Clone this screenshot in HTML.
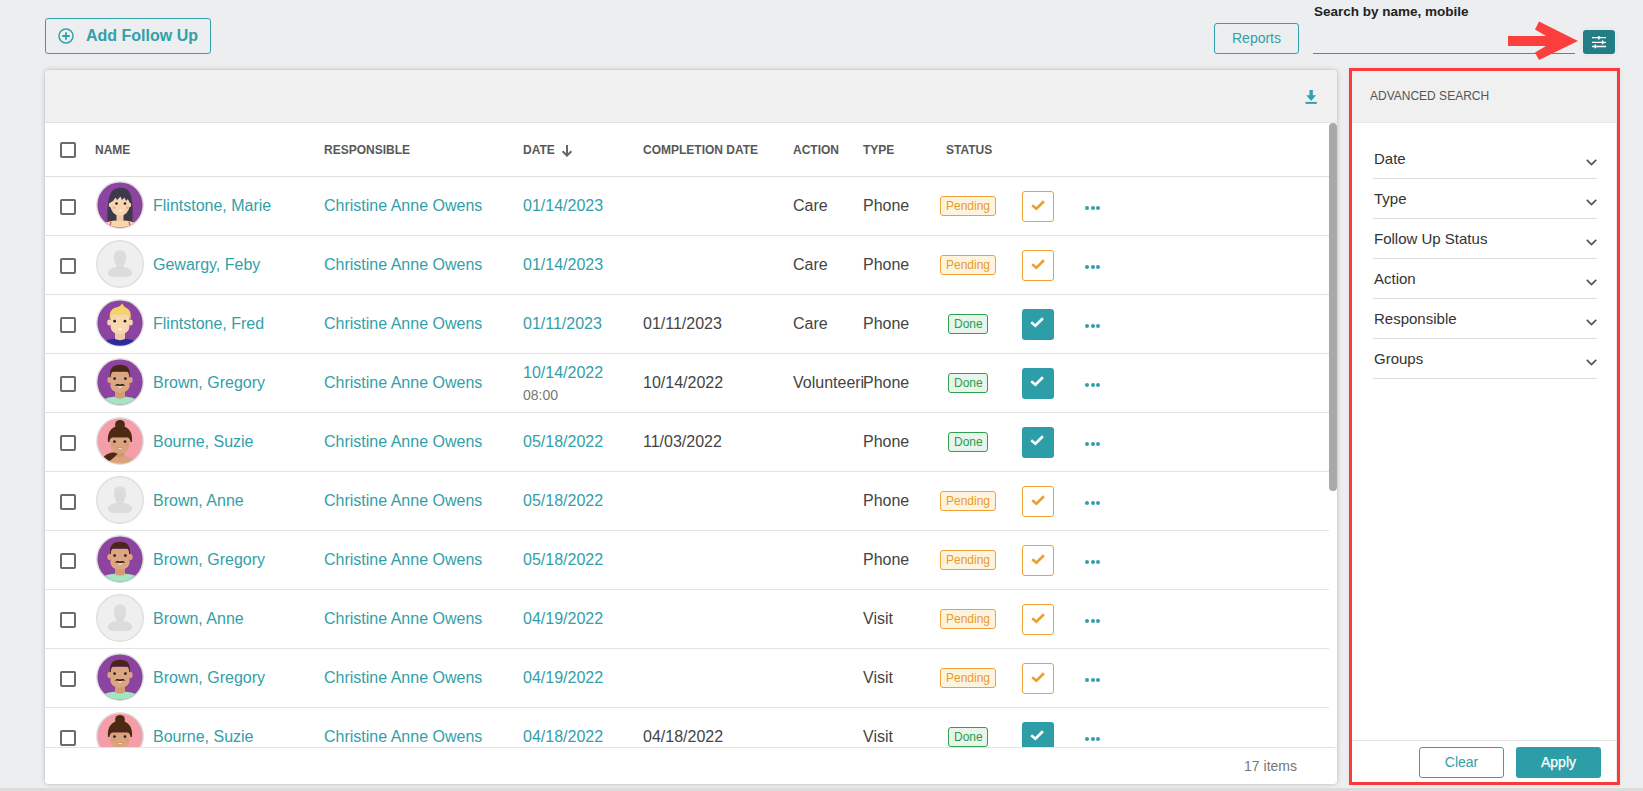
<!DOCTYPE html>
<html><head><meta charset="utf-8"><title>Follow Ups</title>
<style>
*{box-sizing:border-box;margin:0;padding:0}
html,body{width:1643px;height:791px;overflow:hidden;background:#eceef0;font-family:"Liberation Sans",sans-serif}
#root{position:relative;width:1643px;height:791px;overflow:hidden;background:#eceef0}
.addbtn{position:absolute;left:45px;top:18px;width:166px;height:36px;border:1px solid #33a0a9;border-radius:3px;color:#33a0a9;font-weight:bold;font-size:16px}
.addbtn svg{position:absolute;left:12px;top:9px}
.addbtn span{position:absolute;left:40px;top:8px;line-height:18px}
.reports{position:absolute;left:1214px;top:23px;width:85px;height:31px;border:1px solid #33a0a9;border-radius:3px;color:#33a0a9;font-size:14px;line-height:29px;text-align:center}
.slabel{position:absolute;left:1314px;top:4px;font-size:13.5px;font-weight:bold;color:#222;line-height:16px}
.sline{position:absolute;left:1313px;top:53px;width:262px;height:1px;background:#7a7a7a}
.fbtn{position:absolute;left:1583px;top:30px;width:32px;height:24px;border-radius:3px;background:#237d85;box-shadow:0 0 0 1px rgba(255,255,255,.3),0 0 4px rgba(0,0,0,.1)}
.card{position:absolute;left:45px;top:70px;width:1292px;height:714px;background:#fff;border-radius:4px;box-shadow:0 0 1px rgba(0,0,0,.22),0 0 5px rgba(0,0,0,.2)}
.chead{position:absolute;left:45px;top:70px;width:1292px;height:53px;background:#f0f0f0;border-bottom:1px solid #e2e2e2;border-radius:4px 4px 0 0}
.hsep{position:absolute;left:45px;top:176px;width:1284px;height:1px;background:#e0e0e0}
.th{position:absolute;top:143px;font-size:12px;font-weight:bold;color:#585858;line-height:14px}
.sep{position:absolute;left:45px;width:1284px;height:1px;background:#e3e3e3}
.rcb{position:absolute;width:16px;height:16px;border:2px solid #6a6a6a;border-radius:2px}
.avw{position:absolute;width:48px;height:48px}
.c{position:absolute;font-size:16px;line-height:18px;white-space:nowrap}
.link{color:#33a0a9}
.dark{color:#444}
.time{font-size:14px;color:#777;line-height:14px}
.badge{position:absolute;height:20px;border:1px solid;border-radius:3px;font-size:12px;line-height:18px;padding:0 5px}
.bp{background:#fdf4df;border-color:#eea233;color:#e99a2a;width:56px}
.bd{background:#e8f4ec;border-color:#2ba24e;color:#24a04a;width:40px}
.cb{position:absolute;width:32px;height:31px;border-radius:3px}
.cb.pend{border:1px solid #eea233;background:#fff}
.cb.done{background:#2d9ea8}
.cb.done svg{left:0;top:0}
.dots{position:absolute;width:16px;height:5px}
.dots i{position:absolute;top:0;width:4.2px;height:4.2px;border-radius:50%;background:#33a0a9}
.dots i:nth-child(1){left:0}.dots i:nth-child(2){left:5.6px}.dots i:nth-child(3){left:11.2px}
.av{display:block}
.tfoot{position:absolute;left:45px;top:747px;width:1292px;height:37px;background:#fff;border-top:1px solid #e3e3e3;border-radius:0 4px 4px 4px}
.items{position:absolute;right:40px;top:10px;font-size:14px;color:#777;line-height:16px}
.sbar{position:absolute;left:1329px;top:123px;width:8px;height:368px;border-radius:4px;background:#a9a9a9}
.panel{position:absolute;left:1349px;top:68px;width:271px;height:717px;border:3px solid #fb3b3b;background:#fff;box-shadow:inset -1px 0 0 #e9e9e9,0 0 3px rgba(0,0,0,.08)}
.phead{position:absolute;left:1352px;top:71px;width:264px;height:52px;background:#f0f0f0;border-bottom:1px solid #e8e8e8}
.ptitle{position:absolute;left:1370px;top:89px;font-size:12px;color:#555;line-height:14px}
.pitem{position:absolute;left:1373px;width:224px;height:40px;border-bottom:1px solid #dedede}
.pitem span{position:absolute;left:1px;top:11px;font-size:15px;color:#333;line-height:17px}
.pitem svg{position:absolute;left:213px;top:20px}
.pfoot{position:absolute;left:1352px;top:740px;width:265px;height:1px;background:#e2e2e2}
.clear{position:absolute;left:1419px;top:747px;width:85px;height:31px;border:1px solid #33a0a9;border-radius:3px;color:#33a0a9;font-size:14px;line-height:29px;text-align:center}
.apply{position:absolute;left:1516px;top:747px;width:85px;height:31px;border-radius:3px;background:#2d9ea8;color:#fff;font-size:14px;line-height:31px;text-align:center;-webkit-text-stroke:0.25px #fff}
.bottombar{position:absolute;left:0;top:788px;width:1643px;height:3px;background:#dcdcdc}
</style></head><body><div id="root">
<div class="addbtn"><svg width="16" height="16" viewBox="0 0 16 16"><circle cx="8" cy="8" r="7" stroke="#33a0a9" stroke-width="1.5" fill="none"/><path d="M8 4.2V11.8M4.2 8H11.8" stroke="#33a0a9" stroke-width="1.8"/></svg><span>Add Follow Up</span></div>
<div class="reports">Reports</div>
<div class="slabel">Search by name, mobile</div>
<div class="sline"></div>
<svg style="position:absolute;left:1500px;top:15px" width="85" height="55" viewBox="1500 15 85 55"><path d="M1508 36 L1546 36 L1535 29.5 L1539 21.5 L1578 41 L1539 60 L1535 52.5 L1546 46 L1508 46 Z" fill="#fb3e3e"/></svg>
<div class="fbtn"><svg width="32" height="24" viewBox="0 0 32 24"><path d="M9 7.6H23M9 12.4H23M9 16.5H23" stroke="#fff" stroke-width="1.4"/><path d="M15.9 5.9V9.6M19.6 10.6V14.2M12.3 14.6V18.3" stroke="#fff" stroke-width="1.5"/></svg></div>
<div class="card"></div>
<div class="chead"><svg style="position:absolute;left:1260px;top:20px" width="12" height="14" viewBox="0 0 12 14"><path d="M4.5 0H7.8V5.2H11L6.15 11L1.3 5.2H4.5Z" fill="#33a0a9"/><rect x="0.5" y="11.9" width="11.3" height="2" fill="#33a0a9"/></svg></div>
<div class="rcb" style="left:60px;top:142px"></div>
<div class="th" style="left:95px">NAME</div>
<div class="th" style="left:324px">RESPONSIBLE</div>
<div class="th" style="left:523px">DATE</div><svg style="position:absolute;left:561px;top:144px" width="12" height="13" viewBox="0 0 12 13"><path d="M6 1V11.5M1.6 7.2L6 11.6L10.4 7.2" stroke="#666" stroke-width="2" fill="none"/></svg>
<div class="th" style="left:643px">COMPLETION DATE</div>
<div class="th" style="left:793px">ACTION</div>
<div class="th" style="left:863px">TYPE</div>
<div class="th" style="left:946px">STATUS</div>
<div class="hsep"></div>
<div class="sep" style="top:235px"></div>
<div class="rcb" style="left:60px;top:199px"></div>
<div class="avw" style="left:96px;top:181px"><svg class="av" width="48" height="48" viewBox="0 0 48 48"><defs><clipPath id="c0"><circle cx="24" cy="24" r="22.6"/></clipPath></defs><circle cx="24" cy="24" r="24" fill="#dedede"/><g clip-path="url(#c0)"><rect width="48" height="48" fill="#8d43a0"/><path d="M11.5 41 C11 26 12 12 18 8.5 C22 6 28 6 31 8.5 C37 12 37 26 36.5 41 Z" fill="#3d3b4b"/><path d="M4 48 C6 41 14 39.5 24 39.5 C34 39.5 42 41 44 48 Z" fill="#f7d6b0"/><path d="M13.5 48 L15 40.5 M34.5 48 L33 40.5" stroke="#e4685e" stroke-width="1.4"/><path d="M4.5 48 C10 45 16 46.5 24 46.5 C32 46.5 38 45 43.5 48" stroke="#e4685e" stroke-width="1.2" fill="none"/><rect x="20.5" y="31" width="7" height="9" fill="#f2c9a0"/><ellipse cx="24" cy="24" rx="9.6" ry="10.8" fill="#f7d6b0"/><ellipse cx="14.6" cy="24" rx="1.8" ry="2.4" fill="#f7d6b0"/><ellipse cx="33.4" cy="24" rx="1.8" ry="2.4" fill="#f7d6b0"/><path d="M13.5 22 C13.5 14 17 10.5 24 10.5 C31 10.5 34.5 14 34.5 22 L32 18 L30 20 L28.5 16.5 L26 19 L24.5 15.5 L21 19 L19.5 16.5 L17 20 Z" fill="#3d3b4b"/><circle cx="20.5" cy="22.5" r="1.3" fill="#222"/><circle cx="29" cy="22.5" r="1.3" fill="#222"/><circle cx="18" cy="26.5" r="1.5" fill="#f0a890" opacity=".7"/><circle cx="31.5" cy="26.5" r="1.5" fill="#f0a890" opacity=".7"/><path d="M22.3 29 Q24.6 30.8 27 29 Z" fill="#fff"/></g></svg></div>
<div class="c link" style="left:153px;top:197px">Flintstone, Marie</div>
<div class="c link" style="left:324px;top:197px">Christine Anne Owens</div>
<div class="c link" style="left:523px;top:197px">01/14/2023</div>
<div class="c dark" style="left:793px;top:197px">Care</div>
<div class="c dark" style="left:863px;top:197px">Phone</div>
<div class="badge bp" style="left:940px;top:196px">Pending</div>
<div class="cb pend" style="left:1022px;top:191px"><svg width="32" height="31" viewBox="0 0 32 31" style="position:absolute;left:-1px;top:-1px"><path d="M10.2 14.2 L14.4 17.7 L21.9 10.3" stroke="#eb9f2e" stroke-width="2.6" fill="none"/></svg></div>
<div class="dots" style="left:1085px;top:206px"><i></i><i></i><i></i></div>
<div class="sep" style="top:294px"></div>
<div class="rcb" style="left:60px;top:258px"></div>
<div class="avw" style="left:96px;top:240px"><svg class="av" width="48" height="48" viewBox="0 0 48 48"><circle cx="24" cy="24" r="23.3" fill="#efefef" stroke="#dfdfdf" stroke-width="1.4"/><path d="M18 17 C18 12 20.5 10.5 24 10.5 C27.5 10.5 30 12 30 17 C30 21 29 24 27.5 25.5 L27.5 27 C31 27.5 35.5 29 36 32 C36.5 35 34 37 30 37 L18 37 C14 37 11.5 35 12 32 C12.5 29 17 27.5 20.5 27 L20.5 25.5 C19 24 18 21 18 17 Z" fill="#dcdcdc"/></svg></div>
<div class="c link" style="left:153px;top:256px">Gewargy, Feby</div>
<div class="c link" style="left:324px;top:256px">Christine Anne Owens</div>
<div class="c link" style="left:523px;top:256px">01/14/2023</div>
<div class="c dark" style="left:793px;top:256px">Care</div>
<div class="c dark" style="left:863px;top:256px">Phone</div>
<div class="badge bp" style="left:940px;top:255px">Pending</div>
<div class="cb pend" style="left:1022px;top:250px"><svg width="32" height="31" viewBox="0 0 32 31" style="position:absolute;left:-1px;top:-1px"><path d="M10.2 14.2 L14.4 17.7 L21.9 10.3" stroke="#eb9f2e" stroke-width="2.6" fill="none"/></svg></div>
<div class="dots" style="left:1085px;top:265px"><i></i><i></i><i></i></div>
<div class="sep" style="top:353px"></div>
<div class="rcb" style="left:60px;top:317px"></div>
<div class="avw" style="left:96px;top:299px"><svg class="av" width="48" height="48" viewBox="0 0 48 48"><defs><clipPath id="c2"><circle cx="24" cy="24" r="22.6"/></clipPath></defs><circle cx="24" cy="24" r="24" fill="#dedede"/><g clip-path="url(#c2)"><rect width="48" height="48" fill="#8d43a0"/><path d="M2 48 C5 42 13 39.6 24 39.6 C35 39.6 43 42 46 48 Z" fill="#2a2e9c"/><path d="M19 34 L29 34 L29 40 C26 41.5 22 41.5 19 40 Z" fill="#f0c8a0"/><path d="M14.6 15 L33.4 15 L33.4 27 C33.4 32.5 29.5 35 24 35 C18.5 35 14.6 32.5 14.6 27 Z" fill="#f7d6b0"/><ellipse cx="13.2" cy="23.5" rx="2" ry="3" fill="#f7d6b0"/><ellipse cx="34.8" cy="23.5" rx="2" ry="3" fill="#f7d6b0"/><path d="M13.8 20 C13.2 13 15.5 9.5 20 8.6 C22.5 8 24.5 7 26.5 4.6 C27.2 6.5 28.2 7.8 30 8.8 C34 10.5 35.3 14 34.6 20 L33.6 20 C33.4 17 32.6 15.4 30.5 15.4 L17.5 15.4 C15.5 15.4 14.7 17 14.6 20 Z" fill="#f3d36c"/><circle cx="18.6" cy="22.2" r="1.35" fill="#222"/><circle cx="29" cy="22.2" r="1.35" fill="#222"/><path d="M21.6 29.8 Q24.2 32.2 26.8 29.8 Z" fill="#fff"/></g></svg></div>
<div class="c link" style="left:153px;top:315px">Flintstone, Fred</div>
<div class="c link" style="left:324px;top:315px">Christine Anne Owens</div>
<div class="c link" style="left:523px;top:315px">01/11/2023</div>
<div class="c dark" style="left:643px;top:315px">01/11/2023</div>
<div class="c dark" style="left:793px;top:315px">Care</div>
<div class="c dark" style="left:863px;top:315px">Phone</div>
<div class="badge bd" style="left:948px;top:314px">Done</div>
<div class="cb done" style="left:1022px;top:309px"><svg width="32" height="31" viewBox="0 0 32 31" style="position:absolute;left:-1px;top:-1px"><path d="M10.2 14.2 L14.4 17.7 L21.9 10.3" stroke="#fff" stroke-width="2.6" fill="none"/></svg></div>
<div class="dots" style="left:1085px;top:324px"><i></i><i></i><i></i></div>
<div class="sep" style="top:412px"></div>
<div class="rcb" style="left:60px;top:376px"></div>
<div class="avw" style="left:96px;top:358px"><svg class="av" width="48" height="48" viewBox="0 0 48 48"><defs><clipPath id="c3"><circle cx="24" cy="24" r="22.6"/></clipPath></defs><circle cx="24" cy="24" r="24" fill="#dedede"/><g clip-path="url(#c3)"><rect width="48" height="48" fill="#8d43a0"/><path d="M1 48 C4 41 12 38.5 24 38.5 C36 38.5 44 41 47 48 Z" fill="#a3e6bf"/><path d="M19 33 L29 33 L29 39.5 C26 41 22 41 19 39.5 Z" fill="#d39c76"/><path d="M14.4 14 L33.6 14 L33.6 27 C33.6 32 29.5 34.5 24 34.5 C18.5 34.5 14.4 32 14.4 27 Z" fill="#dca682"/><ellipse cx="13.4" cy="22" rx="2" ry="3" fill="#dca682"/><ellipse cx="34.6" cy="22" rx="2" ry="3" fill="#dca682"/><path d="M14 19 C13.5 10 17 6.8 24 6.8 C31 6.8 34.5 10 34 19 L33.2 19 C33 15 32 13.6 30 13.6 L18 13.6 C16 13.6 15 15 14.8 19 Z" fill="#4a2618"/><circle cx="18.6" cy="20.6" r="1.35" fill="#222"/><circle cx="29.4" cy="20.6" r="1.35" fill="#222"/><path d="M18.5 27.8 C20 25.6 22.5 25.8 24 26.6 C25.5 25.8 28 25.6 29.5 27.8 C27.5 27.3 25.5 27.8 24 28.3 C22.5 27.8 20.5 27.3 18.5 27.8 Z" fill="#2a1a12"/><path d="M21.8 28.6 Q24 30.8 26.6 28.6 Z" fill="#fff"/></g></svg></div>
<div class="c link" style="left:153px;top:374px">Brown, Gregory</div>
<div class="c link" style="left:324px;top:374px">Christine Anne Owens</div>
<div class="c link" style="left:523px;top:364px">10/14/2022</div>
<div class="c time" style="left:523px;top:388px">08:00</div>
<div class="c dark" style="left:643px;top:374px">10/14/2022</div>
<div class="c dark" style="left:793px;top:374px">Volunteeri</div>
<div class="c dark" style="left:863px;top:374px">Phone</div>
<div class="badge bd" style="left:948px;top:373px">Done</div>
<div class="cb done" style="left:1022px;top:368px"><svg width="32" height="31" viewBox="0 0 32 31" style="position:absolute;left:-1px;top:-1px"><path d="M10.2 14.2 L14.4 17.7 L21.9 10.3" stroke="#fff" stroke-width="2.6" fill="none"/></svg></div>
<div class="dots" style="left:1085px;top:383px"><i></i><i></i><i></i></div>
<div class="sep" style="top:471px"></div>
<div class="rcb" style="left:60px;top:435px"></div>
<div class="avw" style="left:96px;top:417px"><svg class="av" width="48" height="48" viewBox="0 0 48 48"><defs><clipPath id="c4"><circle cx="24" cy="24" r="22.6"/></clipPath></defs><circle cx="24" cy="24" r="24" fill="#dedede"/><g clip-path="url(#c4)"><rect width="48" height="48" fill="#f59ea9"/><path d="M6 48 C8 42 15 39 24 39 C33 39 40 42 42 48 Z" fill="#d9a47c"/><path d="M20.5 34 L28 34 L28.5 40 L20 40 Z" fill="#cf9870"/><path d="M4 46 C6 40 11 36.5 16 35.6 C18.5 35.2 20.5 36 21.5 37 C17.5 41.5 12 45.5 7 47.5 Z" fill="#4c2912"/><path d="M14.4 21 L33.6 21 L33.6 27.5 C33.6 33 29.5 36.2 24 36.2 C18.5 36.2 14.4 33 14.4 27.5 Z" fill="#d9a47c"/><circle cx="24" cy="7.8" r="4.9" fill="#4c2912"/><path d="M12 25 C11 15 15.5 9 24 9 C32.5 9 37 15 36 25 L34.6 25 C34 22 33 20.6 31 20.6 L17 20.6 C15 20.6 14 22 13.4 25 Z" fill="#4c2912"/><circle cx="18.5" cy="24.6" r="1.35" fill="#222"/><circle cx="29" cy="24.6" r="1.35" fill="#222"/><circle cx="16.8" cy="28" r="1.7" fill="#e88a85" opacity=".6"/><circle cx="30.8" cy="28" r="1.7" fill="#e88a85" opacity=".6"/><path d="M21 31 Q24.2 34.2 27.4 31 Z" fill="#fff" stroke="#d86a4a" stroke-width=".5"/></g></svg></div>
<div class="c link" style="left:153px;top:433px">Bourne, Suzie</div>
<div class="c link" style="left:324px;top:433px">Christine Anne Owens</div>
<div class="c link" style="left:523px;top:433px">05/18/2022</div>
<div class="c dark" style="left:643px;top:433px">11/03/2022</div>
<div class="c dark" style="left:863px;top:433px">Phone</div>
<div class="badge bd" style="left:948px;top:432px">Done</div>
<div class="cb done" style="left:1022px;top:427px"><svg width="32" height="31" viewBox="0 0 32 31" style="position:absolute;left:-1px;top:-1px"><path d="M10.2 14.2 L14.4 17.7 L21.9 10.3" stroke="#fff" stroke-width="2.6" fill="none"/></svg></div>
<div class="dots" style="left:1085px;top:442px"><i></i><i></i><i></i></div>
<div class="sep" style="top:530px"></div>
<div class="rcb" style="left:60px;top:494px"></div>
<div class="avw" style="left:96px;top:476px"><svg class="av" width="48" height="48" viewBox="0 0 48 48"><circle cx="24" cy="24" r="23.3" fill="#efefef" stroke="#dfdfdf" stroke-width="1.4"/><path d="M18 17 C18 12 20.5 10.5 24 10.5 C27.5 10.5 30 12 30 17 C30 21 29 24 27.5 25.5 L27.5 27 C31 27.5 35.5 29 36 32 C36.5 35 34 37 30 37 L18 37 C14 37 11.5 35 12 32 C12.5 29 17 27.5 20.5 27 L20.5 25.5 C19 24 18 21 18 17 Z" fill="#dcdcdc"/></svg></div>
<div class="c link" style="left:153px;top:492px">Brown, Anne</div>
<div class="c link" style="left:324px;top:492px">Christine Anne Owens</div>
<div class="c link" style="left:523px;top:492px">05/18/2022</div>
<div class="c dark" style="left:863px;top:492px">Phone</div>
<div class="badge bp" style="left:940px;top:491px">Pending</div>
<div class="cb pend" style="left:1022px;top:486px"><svg width="32" height="31" viewBox="0 0 32 31" style="position:absolute;left:-1px;top:-1px"><path d="M10.2 14.2 L14.4 17.7 L21.9 10.3" stroke="#eb9f2e" stroke-width="2.6" fill="none"/></svg></div>
<div class="dots" style="left:1085px;top:501px"><i></i><i></i><i></i></div>
<div class="sep" style="top:589px"></div>
<div class="rcb" style="left:60px;top:553px"></div>
<div class="avw" style="left:96px;top:535px"><svg class="av" width="48" height="48" viewBox="0 0 48 48"><defs><clipPath id="c6"><circle cx="24" cy="24" r="22.6"/></clipPath></defs><circle cx="24" cy="24" r="24" fill="#dedede"/><g clip-path="url(#c6)"><rect width="48" height="48" fill="#8d43a0"/><path d="M1 48 C4 41 12 38.5 24 38.5 C36 38.5 44 41 47 48 Z" fill="#a3e6bf"/><path d="M19 33 L29 33 L29 39.5 C26 41 22 41 19 39.5 Z" fill="#d39c76"/><path d="M14.4 14 L33.6 14 L33.6 27 C33.6 32 29.5 34.5 24 34.5 C18.5 34.5 14.4 32 14.4 27 Z" fill="#dca682"/><ellipse cx="13.4" cy="22" rx="2" ry="3" fill="#dca682"/><ellipse cx="34.6" cy="22" rx="2" ry="3" fill="#dca682"/><path d="M14 19 C13.5 10 17 6.8 24 6.8 C31 6.8 34.5 10 34 19 L33.2 19 C33 15 32 13.6 30 13.6 L18 13.6 C16 13.6 15 15 14.8 19 Z" fill="#4a2618"/><circle cx="18.6" cy="20.6" r="1.35" fill="#222"/><circle cx="29.4" cy="20.6" r="1.35" fill="#222"/><path d="M18.5 27.8 C20 25.6 22.5 25.8 24 26.6 C25.5 25.8 28 25.6 29.5 27.8 C27.5 27.3 25.5 27.8 24 28.3 C22.5 27.8 20.5 27.3 18.5 27.8 Z" fill="#2a1a12"/><path d="M21.8 28.6 Q24 30.8 26.6 28.6 Z" fill="#fff"/></g></svg></div>
<div class="c link" style="left:153px;top:551px">Brown, Gregory</div>
<div class="c link" style="left:324px;top:551px">Christine Anne Owens</div>
<div class="c link" style="left:523px;top:551px">05/18/2022</div>
<div class="c dark" style="left:863px;top:551px">Phone</div>
<div class="badge bp" style="left:940px;top:550px">Pending</div>
<div class="cb pend" style="left:1022px;top:545px"><svg width="32" height="31" viewBox="0 0 32 31" style="position:absolute;left:-1px;top:-1px"><path d="M10.2 14.2 L14.4 17.7 L21.9 10.3" stroke="#eb9f2e" stroke-width="2.6" fill="none"/></svg></div>
<div class="dots" style="left:1085px;top:560px"><i></i><i></i><i></i></div>
<div class="sep" style="top:648px"></div>
<div class="rcb" style="left:60px;top:612px"></div>
<div class="avw" style="left:96px;top:594px"><svg class="av" width="48" height="48" viewBox="0 0 48 48"><circle cx="24" cy="24" r="23.3" fill="#efefef" stroke="#dfdfdf" stroke-width="1.4"/><path d="M18 17 C18 12 20.5 10.5 24 10.5 C27.5 10.5 30 12 30 17 C30 21 29 24 27.5 25.5 L27.5 27 C31 27.5 35.5 29 36 32 C36.5 35 34 37 30 37 L18 37 C14 37 11.5 35 12 32 C12.5 29 17 27.5 20.5 27 L20.5 25.5 C19 24 18 21 18 17 Z" fill="#dcdcdc"/></svg></div>
<div class="c link" style="left:153px;top:610px">Brown, Anne</div>
<div class="c link" style="left:324px;top:610px">Christine Anne Owens</div>
<div class="c link" style="left:523px;top:610px">04/19/2022</div>
<div class="c dark" style="left:863px;top:610px">Visit</div>
<div class="badge bp" style="left:940px;top:609px">Pending</div>
<div class="cb pend" style="left:1022px;top:604px"><svg width="32" height="31" viewBox="0 0 32 31" style="position:absolute;left:-1px;top:-1px"><path d="M10.2 14.2 L14.4 17.7 L21.9 10.3" stroke="#eb9f2e" stroke-width="2.6" fill="none"/></svg></div>
<div class="dots" style="left:1085px;top:619px"><i></i><i></i><i></i></div>
<div class="sep" style="top:707px"></div>
<div class="rcb" style="left:60px;top:671px"></div>
<div class="avw" style="left:96px;top:653px"><svg class="av" width="48" height="48" viewBox="0 0 48 48"><defs><clipPath id="c8"><circle cx="24" cy="24" r="22.6"/></clipPath></defs><circle cx="24" cy="24" r="24" fill="#dedede"/><g clip-path="url(#c8)"><rect width="48" height="48" fill="#8d43a0"/><path d="M1 48 C4 41 12 38.5 24 38.5 C36 38.5 44 41 47 48 Z" fill="#a3e6bf"/><path d="M19 33 L29 33 L29 39.5 C26 41 22 41 19 39.5 Z" fill="#d39c76"/><path d="M14.4 14 L33.6 14 L33.6 27 C33.6 32 29.5 34.5 24 34.5 C18.5 34.5 14.4 32 14.4 27 Z" fill="#dca682"/><ellipse cx="13.4" cy="22" rx="2" ry="3" fill="#dca682"/><ellipse cx="34.6" cy="22" rx="2" ry="3" fill="#dca682"/><path d="M14 19 C13.5 10 17 6.8 24 6.8 C31 6.8 34.5 10 34 19 L33.2 19 C33 15 32 13.6 30 13.6 L18 13.6 C16 13.6 15 15 14.8 19 Z" fill="#4a2618"/><circle cx="18.6" cy="20.6" r="1.35" fill="#222"/><circle cx="29.4" cy="20.6" r="1.35" fill="#222"/><path d="M18.5 27.8 C20 25.6 22.5 25.8 24 26.6 C25.5 25.8 28 25.6 29.5 27.8 C27.5 27.3 25.5 27.8 24 28.3 C22.5 27.8 20.5 27.3 18.5 27.8 Z" fill="#2a1a12"/><path d="M21.8 28.6 Q24 30.8 26.6 28.6 Z" fill="#fff"/></g></svg></div>
<div class="c link" style="left:153px;top:669px">Brown, Gregory</div>
<div class="c link" style="left:324px;top:669px">Christine Anne Owens</div>
<div class="c link" style="left:523px;top:669px">04/19/2022</div>
<div class="c dark" style="left:863px;top:669px">Visit</div>
<div class="badge bp" style="left:940px;top:668px">Pending</div>
<div class="cb pend" style="left:1022px;top:663px"><svg width="32" height="31" viewBox="0 0 32 31" style="position:absolute;left:-1px;top:-1px"><path d="M10.2 14.2 L14.4 17.7 L21.9 10.3" stroke="#eb9f2e" stroke-width="2.6" fill="none"/></svg></div>
<div class="dots" style="left:1085px;top:678px"><i></i><i></i><i></i></div>
<div class="sep" style="top:766px"></div>
<div class="rcb" style="left:60px;top:730px"></div>
<div class="avw" style="left:96px;top:712px"><svg class="av" width="48" height="48" viewBox="0 0 48 48"><defs><clipPath id="c9"><circle cx="24" cy="24" r="22.6"/></clipPath></defs><circle cx="24" cy="24" r="24" fill="#dedede"/><g clip-path="url(#c9)"><rect width="48" height="48" fill="#f59ea9"/><path d="M6 48 C8 42 15 39 24 39 C33 39 40 42 42 48 Z" fill="#d9a47c"/><path d="M20.5 34 L28 34 L28.5 40 L20 40 Z" fill="#cf9870"/><path d="M4 46 C6 40 11 36.5 16 35.6 C18.5 35.2 20.5 36 21.5 37 C17.5 41.5 12 45.5 7 47.5 Z" fill="#4c2912"/><path d="M14.4 21 L33.6 21 L33.6 27.5 C33.6 33 29.5 36.2 24 36.2 C18.5 36.2 14.4 33 14.4 27.5 Z" fill="#d9a47c"/><circle cx="24" cy="7.8" r="4.9" fill="#4c2912"/><path d="M12 25 C11 15 15.5 9 24 9 C32.5 9 37 15 36 25 L34.6 25 C34 22 33 20.6 31 20.6 L17 20.6 C15 20.6 14 22 13.4 25 Z" fill="#4c2912"/><circle cx="18.5" cy="24.6" r="1.35" fill="#222"/><circle cx="29" cy="24.6" r="1.35" fill="#222"/><circle cx="16.8" cy="28" r="1.7" fill="#e88a85" opacity=".6"/><circle cx="30.8" cy="28" r="1.7" fill="#e88a85" opacity=".6"/><path d="M21 31 Q24.2 34.2 27.4 31 Z" fill="#fff" stroke="#d86a4a" stroke-width=".5"/></g></svg></div>
<div class="c link" style="left:153px;top:728px">Bourne, Suzie</div>
<div class="c link" style="left:324px;top:728px">Christine Anne Owens</div>
<div class="c link" style="left:523px;top:728px">04/18/2022</div>
<div class="c dark" style="left:643px;top:728px">04/18/2022</div>
<div class="c dark" style="left:863px;top:728px">Visit</div>
<div class="badge bd" style="left:948px;top:727px">Done</div>
<div class="cb done" style="left:1022px;top:722px"><svg width="32" height="31" viewBox="0 0 32 31" style="position:absolute;left:-1px;top:-1px"><path d="M10.2 14.2 L14.4 17.7 L21.9 10.3" stroke="#fff" stroke-width="2.6" fill="none"/></svg></div>
<div class="dots" style="left:1085px;top:737px"><i></i><i></i><i></i></div>
<div class="sbar"></div>
<div class="tfoot"><div class="items">17 items</div></div>
<div class="panel"></div>
<div class="phead"></div><div class="ptitle">ADVANCED SEARCH</div>
<div class="pitem" style="top:139px"><span>Date</span><svg width="11" height="7" viewBox="0 0 11 7"><path d="M0.8 0.8L5.5 5.5L10.2 0.8" stroke="#555" stroke-width="1.7" fill="none"/></svg></div><div class="pitem" style="top:179px"><span>Type</span><svg width="11" height="7" viewBox="0 0 11 7"><path d="M0.8 0.8L5.5 5.5L10.2 0.8" stroke="#555" stroke-width="1.7" fill="none"/></svg></div><div class="pitem" style="top:219px"><span>Follow Up Status</span><svg width="11" height="7" viewBox="0 0 11 7"><path d="M0.8 0.8L5.5 5.5L10.2 0.8" stroke="#555" stroke-width="1.7" fill="none"/></svg></div><div class="pitem" style="top:259px"><span>Action</span><svg width="11" height="7" viewBox="0 0 11 7"><path d="M0.8 0.8L5.5 5.5L10.2 0.8" stroke="#555" stroke-width="1.7" fill="none"/></svg></div><div class="pitem" style="top:299px"><span>Responsible</span><svg width="11" height="7" viewBox="0 0 11 7"><path d="M0.8 0.8L5.5 5.5L10.2 0.8" stroke="#555" stroke-width="1.7" fill="none"/></svg></div><div class="pitem" style="top:339px"><span>Groups</span><svg width="11" height="7" viewBox="0 0 11 7"><path d="M0.8 0.8L5.5 5.5L10.2 0.8" stroke="#555" stroke-width="1.7" fill="none"/></svg></div>
<div class="pfoot"></div><div class="clear">Clear</div><div class="apply">Apply</div>
<div class="bottombar"></div>
</div></body></html>
